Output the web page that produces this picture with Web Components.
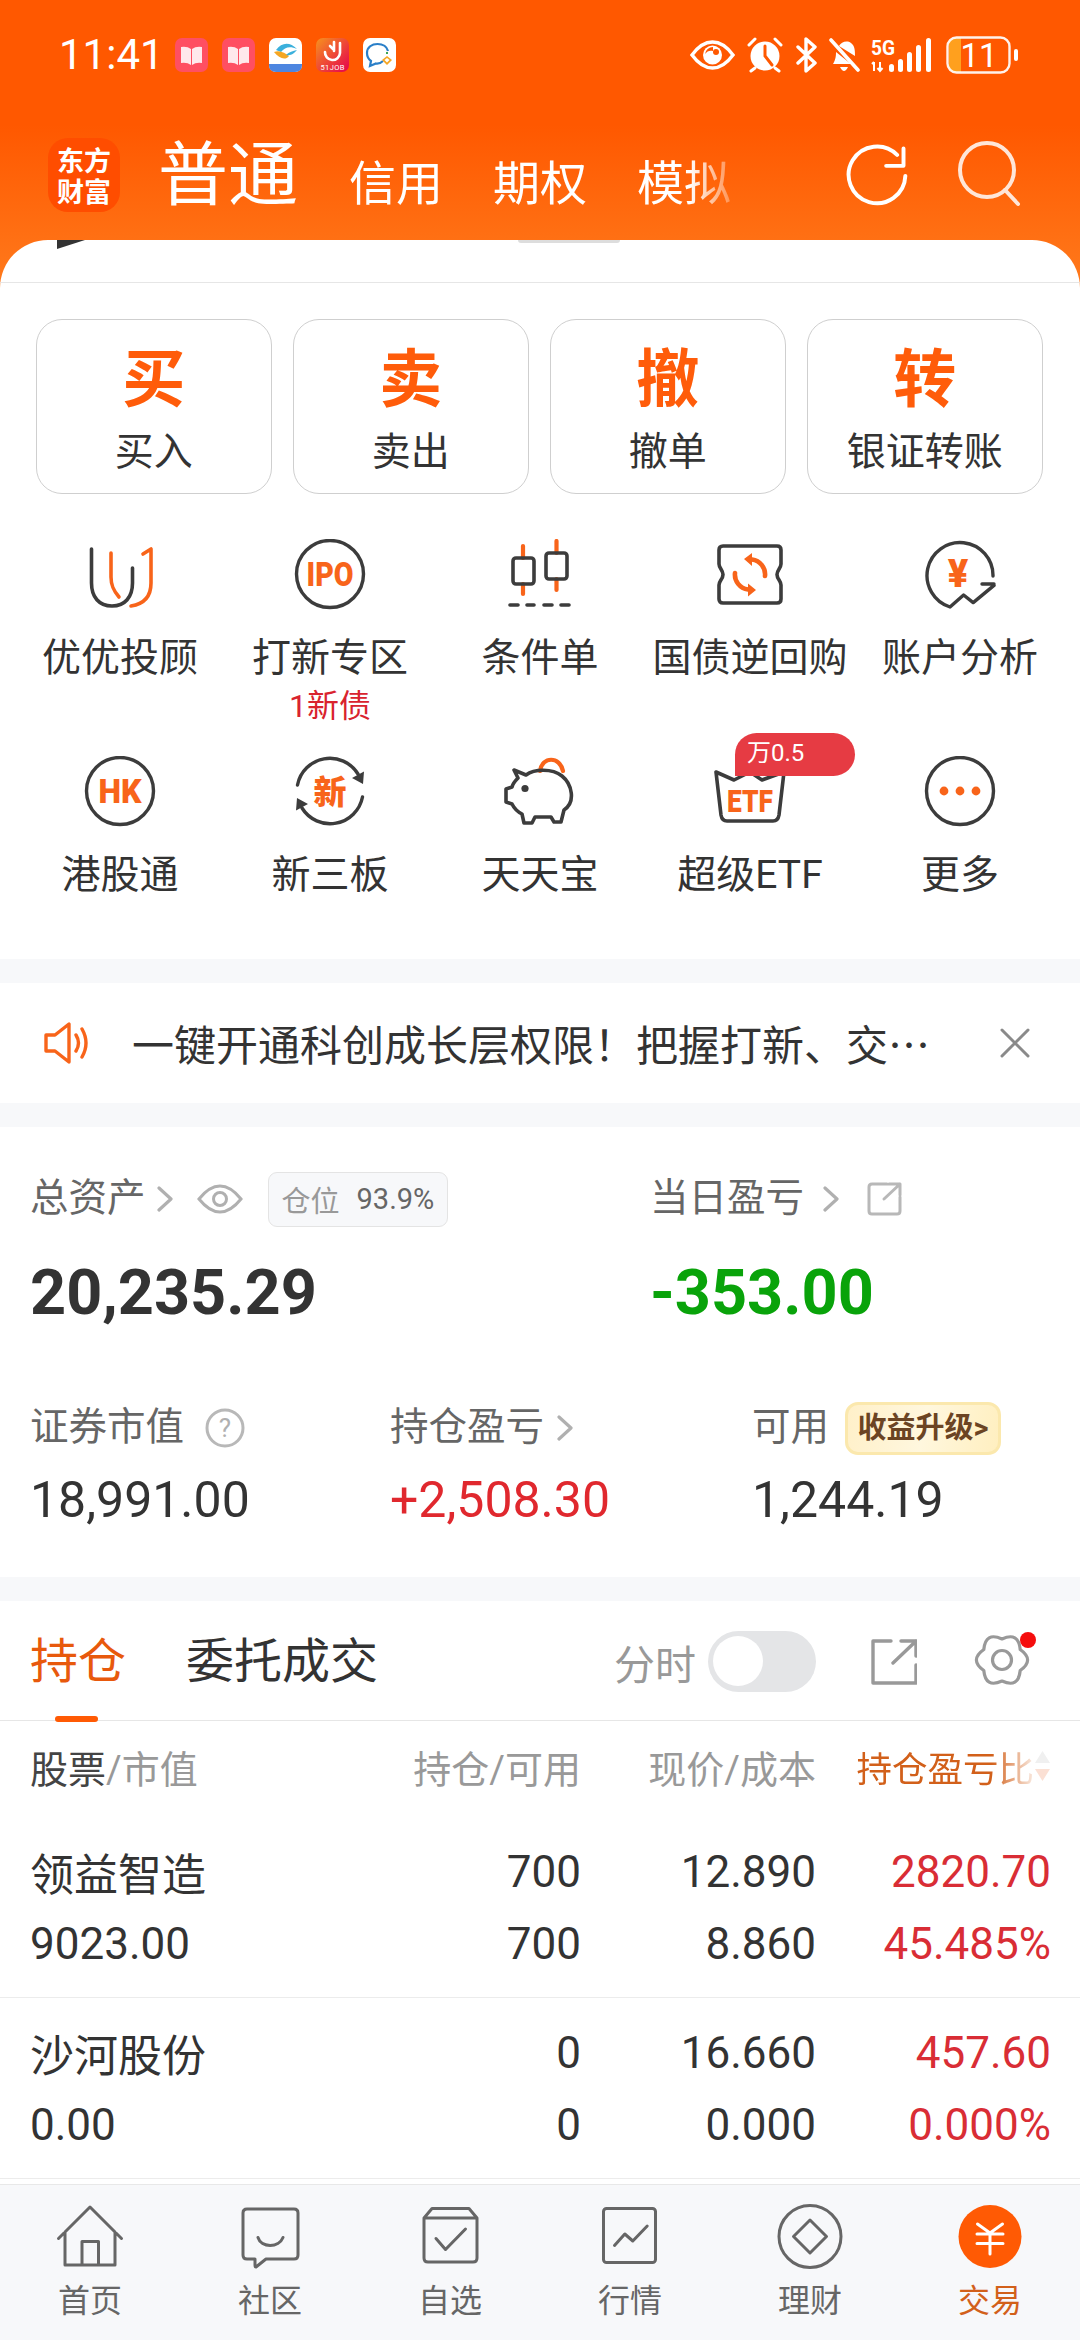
<!DOCTYPE html>
<html lang="zh">
<head>
<meta charset="utf-8">
<title>交易</title>
<style>
    html, body { margin: 0; padding: 0; }
    body {
        width: 1080px;
        height: 2340px;
        overflow: hidden;
        background: #fff;
        font-family: Roboto, "Noto Sans CJK SC", sans-serif;
        color: #333;
    }
    #app { display: flex; flex-direction: column; height: 2340px; }
    #scroll { flex: 1; min-height: 0; overflow: hidden; }
    .gap { height: 24px; background: #f7f8fa; }
    svg { display: block; }
</style>
</head>
<body>
<div id="app">
    <ef-header></ef-header>
    <div id="scroll">
        <ef-panel>
            <ef-action glyph="买" label="买入"></ef-action>
            <ef-action glyph="卖" label="卖出"></ef-action>
            <ef-action glyph="撤" label="撤单"></ef-action>
            <ef-action glyph="转" label="银证转账"></ef-action>

            <ef-entry slot="grid" label="优优投顾">
                <svg width="72" height="72" fill="none" stroke-width="3.6" stroke-linecap="round" stroke-linejoin="round">
                    <path stroke="#3c3c3c" d="M7.5 10V44C7.5 58 15 67 28 67C41 67 48.5 58 48.5 44V29"/>
                    <path stroke="#f8641a" d="M27 14V38C27 46 29 51 35 58M59 15L67 10V44C67 57 60 65 47 67"/>
                </svg>
            </ef-entry>
            <ef-entry slot="grid" label="打新专区" sub="1新债">
                <svg width="72" height="72" fill="none">
                    <circle cx="36" cy="35" r="33.5" stroke="#3c3c3c" stroke-width="3.4"/>
                    <text x="36" y="47" text-anchor="middle" font-family="Roboto" font-weight="900" font-size="33" fill="#f8641a" stroke="none" textLength="47" lengthAdjust="spacingAndGlyphs">IPO</text>
                </svg>
            </ef-entry>
            <ef-entry slot="grid" label="条件单">
                <svg width="72" height="72" fill="none" stroke-width="3.6" stroke-linecap="round" stroke-linejoin="round">
                    <path stroke="#f8641a" stroke-width="4.2" d="M19 7V19M19 45V55M52.5 2V14M52.5 40V51"/>
                    <rect x="9" y="19" width="21" height="26" rx="3" stroke="#3c3c3c"/>
                    <rect x="42" y="14" width="21" height="26" rx="3" stroke="#3c3c3c"/>
                    <path stroke="#3c3c3c" d="M6 66H14M23 66H30M40 66H48M57 66H65"/>
                </svg>
            </ef-entry>
            <ef-entry slot="grid" label="国债逆回购">
                <svg width="72" height="72" fill="none" stroke-linecap="round" stroke-linejoin="round">
                    <path stroke="#3c3c3c" stroke-width="3.6" d="M9 7H63Q67 7 67 11V25C67 29 63 31 63 35.5C63 40 67 42 67 46V60Q67 64 63 64H9Q5 64 5 60V46C5 42 9 40 9 35.5C9 31 5 29 5 25V11Q5 7 9 7Z"/>
                    <path stroke="#f8641a" stroke-width="4.6" d="M51 37A15 15 0 0 0 38 20.5M21 34A15 15 0 0 0 34 50.5"/>
                    <path fill="#f8641a" d="M30 20L38 14V27ZM42 51L34 44.5V57.5Z"/>
                </svg>
            </ef-entry>
            <ef-entry slot="grid" label="账户分析">
                <svg width="72" height="72" fill="none" stroke-linecap="round" stroke-linejoin="round">
                    <path stroke="#3c3c3c" stroke-width="3.4" d="M69 37A33 33 0 1 0 26 68L39.6 56L49.2 63.6L70 46.4M58 45H70"/>
                    <text x="34" y="48" text-anchor="middle" font-family="Roboto" font-weight="900" font-size="38" fill="#f8641a">¥</text>
                </svg>
            </ef-entry>
            <ef-entry slot="grid" label="港股通">
                <svg width="72" height="72" fill="none">
                    <circle cx="36" cy="35" r="33.5" stroke="#3c3c3c" stroke-width="3.4"/>
                    <text x="36" y="47" text-anchor="middle" font-family="Roboto" font-weight="900" font-size="33" fill="#f8641a" textLength="43" lengthAdjust="spacingAndGlyphs">HK</text>
                </svg>
            </ef-entry>
            <ef-entry slot="grid" label="新三板">
                <svg width="72" height="72" fill="none" stroke-linecap="round" stroke-linejoin="round">
                    <path stroke="#3c3c3c" stroke-width="3.4" d="M3.5 29A33 33 0 0 1 64 18M68.5 41A33 33 0 0 1 8 52"/>
                    <path fill="#3c3c3c" d="M58 22L70 15.5L69 28ZM14 48L2 54.5L3 42Z"/>
                    <text x="36" y="48" text-anchor="middle" font-family="'Noto Sans CJK SC'" font-weight="900" font-size="33" fill="#f8641a">新</text>
                </svg>
            </ef-entry>
            <ef-entry slot="grid" label="天天宝">
                <svg width="72" height="72" fill="none" stroke-linecap="round" stroke-linejoin="round">
                    <path stroke="#f8641a" stroke-width="4.2" d="M36 15C38 0 56 0 59 15"/>
                    <path stroke="#3c3c3c" stroke-width="3.6" d="M10 14L22 19C30 13 48 12 58 20C68 28 72 46 60 54L57 66H50L47 61H31L28 67H20L18 58C12 55 10 52 8 48L2 46V33L8 31C9 27 12 24 14 22Z"/>
                    <circle cx="21" cy="32.5" r="3.6" fill="#3c3c3c"/>
                </svg>
            </ef-entry>
            <ef-entry slot="grid" label="超级ETF" tag="万0.5">
                <svg width="72" height="72" fill="none" stroke-linecap="round" stroke-linejoin="round">
                    <path stroke="#3c3c3c" stroke-width="3.6" d="M2 16L7 59Q8 65 13 65H59Q64 65 65 59L70 16L48 24L36 16L20 24Z"/>
                    <text x="36" y="56" text-anchor="middle" font-family="Roboto" font-weight="900" font-size="31" fill="#f8641a" textLength="46" lengthAdjust="spacingAndGlyphs">ETF</text>
                </svg>
            </ef-entry>
            <ef-entry slot="grid" label="更多">
                <svg width="72" height="72" fill="none">
                    <circle cx="36" cy="35" r="33.5" stroke="#3c3c3c" stroke-width="3.4"/>
                    <circle cx="20" cy="35" r="4.4" fill="#f8641a"/><circle cx="36" cy="35" r="4.4" fill="#f8641a"/><circle cx="52" cy="35" r="4.4" fill="#f8641a"/>
                </svg>
            </ef-entry>
        </ef-panel>
        <div class="gap"></div>
        <ef-notice>一键开通科创成长层权限！把握打新、交…</ef-notice>
        <div class="gap"></div>
        <ef-assets></ef-assets>
        <div class="gap"></div>
        <ef-positions>
            <ef-stock name="领益智造" value="9023.00" hold="700" free="700" price="12.890" cost="8.860" pl="2820.70" ratio="45.485%"></ef-stock>
            <ef-stock name="沙河股份" value="0.00" hold="0" free="0" price="16.660" cost="0.000" pl="457.60" ratio="0.000%"></ef-stock>
        </ef-positions>
    </div>
    <ef-tabbar>
        <ef-tab label="首页">
            <svg width="72" height="72" fill="none" stroke="#666" stroke-width="3" stroke-linejoin="round" stroke-linecap="round"><path d="M4.5 37.5L36 6L67.5 37.5M11 31V64H61V31M28 64V40.5H44.5V64"/></svg>
        </ef-tab>
        <ef-tab label="社区">
            <svg width="72" height="72" fill="none" stroke="#666" stroke-width="3" stroke-linejoin="round" stroke-linecap="round"><path d="M13 8H60Q64 8 64 12V54Q64 58 60 58H32L22 66Q21 66 21 64V58H13Q9 58 9 54V12Q9 8 13 8ZM24 36.5C27 47 45 47 49 36.5"/></svg>
        </ef-tab>
        <ef-tab label="自选">
            <svg width="72" height="72" fill="none" stroke="#666" stroke-width="3" stroke-linejoin="round" stroke-linecap="round"><path d="M10 17L18 7.5H55L63 17V57Q63 61 59 61H14Q10 61 10 57ZM10 17H63M22 37.5L31.5 48.5L51.5 28"/></svg>
        </ef-tab>
        <ef-tab label="行情">
            <svg width="72" height="72" fill="none" stroke="#666" stroke-width="3" stroke-linejoin="round" stroke-linecap="round"><rect x="9.5" y="7.5" width="52" height="54" rx="3"/><path d="M20.5 44.5L30.8 33L38.8 40L53.2 25"/></svg>
        </ef-tab>
        <ef-tab label="理财">
            <svg width="72" height="72" fill="none" stroke="#666" stroke-width="3" stroke-linejoin="round"><circle cx="36" cy="35.5" r="31"/><path d="M36 19L52.500 35.500L36 52L19.500 35.500Z"/></svg>
        </ef-tab>
        <ef-tab label="交易" active>
            <svg width="72" height="72" fill="none" stroke="#fff" stroke-width="3" stroke-linecap="round"><circle cx="36" cy="35.500" r="31.500" fill="#ff5a04" stroke="none"/><path d="M23.500 23L36 32M48.500 23L36 32M23 33H49M23 42.500H49M36 32V53"/></svg>
        </ef-tab>
    </ef-tabbar>
</div>

<script>
class EfHeader extends HTMLElement {
    constructor() {
        super();
        this.attachShadow({mode: 'open'});
        this.shadowRoot.innerHTML = `
            <style>
                :host {
                    display: block;
                    height: 288px;
                    margin-bottom: -48px;
                    flex: none;
                    color: #fff;
                    background: linear-gradient(#ff5800 0, #ff5800 125px, #ff7a1c 288px);
                }
                #status {
                    display: flex;
                    align-items: center;
                    height: 36px;
                    padding: 37px 62px 0 59px;
                }
                #time { width: 116px; font: 400 42px/36px Roboto, sans-serif; }
                #apps { display: flex; gap: 14px; }
                #apps svg { width: 33px; height: 34px; }
                #sys { display: flex; align-items: center; margin-left: auto; }
                #nav { display: flex; align-items: center; height: 74px; padding: 65px 0 0 48px; }
                #logo {
                    flex: none;
                    box-sizing: border-box;
                    width: 72px;
                    height: 74px;
                    padding: 6px 9px 0;
                    border-radius: 20px;
                    background: #ff4d00;
                    font: 700 27px/31px "Noto Sans CJK SC", sans-serif;
                    text-align: center;
                }
                #tabs {
                    width: 584px;
                    margin-left: 38px;
                    display: flex;
                    align-items: baseline;
                    gap: 50px;
                    font: 400 47px/80px "Noto Sans CJK SC", sans-serif;
                    white-space: nowrap;
                    -webkit-mask-image: linear-gradient(to right, #000 91%, rgba(0,0,0,.1) 100%);
                    mask-image: linear-gradient(to right, #000 91%, rgba(0,0,0,.1) 100%);
                }
                #tabs b { font-weight: 400; font-size: 70px; margin-right: 1px; }
                #tools { display: flex; align-items: center; margin-left: 103px; gap: 49px; }
            </style>
            <div id="status">
                <div id="time">11:41</div>
                <div id="apps">
                    <svg viewBox="0 0 33 34"><rect width="33" height="34" rx="7" fill="#ff4f62"/><path fill="#fff" fill-opacity=".88" d="M6 9Q12 8 16 11V27Q12 24 6 25ZM27 9Q21 8 17 11V27Q21 24 27 25Z"/></svg>
                    <svg viewBox="0 0 33 34"><rect width="33" height="34" rx="7" fill="#ff4f62"/><path fill="#fff" fill-opacity=".88" d="M6 9Q12 8 16 11V27Q12 24 6 25ZM27 9Q21 8 17 11V27Q21 24 27 25Z"/></svg>
                    <svg viewBox="0 0 33 34"><rect width="33" height="34" rx="7" fill="#fff"/><path fill="#3bb0dc" d="M7 12C13 4 21 4 28 11C21 8 16 9 12 14Z"/><path fill="#f5a623" d="M5 14C11 12 16 15 20 18C16 23 10 20 5 14Z"/><path fill="#3bb0dc" d="M28 12C24 17 19 18 17 17C20 14 24 13 28 12Z"/><path fill="#4d86e0" d="M0 26H33V27Q33 34 26 34H7Q0 34 0 27Z"/></svg>
                    <svg viewBox="0 0 33 34"><defs><linearGradient id="job" x1="0" y1="0" x2="1" y2="1"><stop offset="0" stop-color="#f7931e"/><stop offset="1" stop-color="#e5004f"/></linearGradient></defs><rect width="33" height="34" rx="7" fill="url(#job)"/><path fill="none" stroke="#fff" stroke-width="2.600" stroke-linecap="round" d="M9 14A7.500 7.500 0 1 0 24 15V5M18 4V13M14 8L17 11"/><text x="16.500" y="31.500" text-anchor="middle" font-family="Roboto" font-size="7.500" fill="#fff" textLength="24">51JOB</text></svg>
                    <svg viewBox="0 0 33 34"><rect width="33" height="34" rx="7" fill="#fff"/><path fill="none" stroke="#2a7fc8" stroke-width="2.200" d="M20 23Q17 26 13 25.500L7 28L8 23Q4 20 4 15C4 9 9 6 14.500 6C20 6 24 9 25 13"/><path fill="#f5a623" d="M24 18L29 22L24 27L19 22Z"/><path fill="#fff" d="M24 20L26.500 22L24 24.500L21.500 22Z"/><path fill="#3aa655" d="M23 14L25 14L25 16L23 16Z"/></svg>
                </div>
                <div id="sys">
                    <svg width="45" height="30" viewBox="0 0 45 30" style="margin-right:12px"><path fill="none" stroke="#fff" stroke-width="3.400" d="M2 15C10 4 17 2 22.500 2S35 4 43 15C35 26 28 28 22.500 28S10 26 2 15Z"/><circle cx="22.500" cy="15" r="9.500" fill="#fff"/><path fill="#ff5800" d="M23 7A8 8 0 0 0 15 14C17 11 20 10 23 11Z"/><circle cx="26" cy="12" r="3" fill="#ff5800"/></svg>
                    <svg width="36" height="36" viewBox="0 0 36 36" style="margin-right:12px"><circle cx="18" cy="19" r="14.500" fill="#fff"/><path fill="none" stroke="#ff5800" stroke-width="3" stroke-linecap="round" d="M18 9V19L25 28"/><path fill="none" stroke="#fff" stroke-width="3" stroke-linecap="round" d="M2 8L8 2M34 8L28 2M4 34L8 31M32 34L28 31"/></svg>
                    <svg width="23" height="36" viewBox="0 0 23 36" style="margin-right:11px"><path fill="none" stroke="#fff" stroke-width="3.400" stroke-linejoin="round" stroke-linecap="round" d="M3 26L20 10L11 2V34L20 26L3 10"/></svg>
                    <svg width="31" height="36" viewBox="0 0 31 36" style="margin-right:11px"><path fill="#fff" d="M4 27C7 22 7 18 7 15L22 27ZM10 9C12 5 18 3 22 6C26 9 26 14 26 19Z"/><path fill="none" stroke="#fff" stroke-width="3.600" stroke-linecap="round" d="M2 3L29 33"/><path fill="#fff" d="M11 30H19Q17 34 15 34T11 30Z"/></svg>
                    <svg width="62" height="36" viewBox="0 0 62 36" style="margin-right:13px">
                        <text x="0" y="18" font-family="Roboto" font-weight="700" font-size="20" fill="#fff" textLength="24" lengthAdjust="spacingAndGlyphs">5G</text>
                        <path fill="none" stroke="#fff" stroke-width="2" d="M3 25V34M1 27L3 25M9 25V34M6.500 31L9 34L11.500 31"/>
                        <g fill="#fff"><rect x="18" y="27" width="5" height="8" rx="2.500"/><rect x="27" y="22" width="5" height="13" rx="2.500"/><rect x="36" y="15" width="5" height="20" rx="2.500"/><rect x="45" y="8" width="5" height="27" rx="2.500"/><rect x="55" y="1" width="5" height="34" rx="2.500"/></g>
                    </svg>
                    <svg width="72" height="38" viewBox="0 0 72 38">
                        <rect x="3" y="2" width="12" height="34" rx="6" fill="#ffa01e"/><rect x="9" y="2" width="6" height="34" fill="#ffa01e"/>
                        <rect x="1.500" y="1.500" width="62" height="35" rx="9" fill="none" stroke="#fff" stroke-opacity=".92" stroke-width="2.400"/>
                        <text x="33" y="31" text-anchor="middle" font-family="Roboto" font-size="33" fill="#fff">11</text>
                        <rect x="68" y="13" width="4" height="12" rx="2" fill="#fff"/>
                    </svg>
                </div>
            </div>
            <div id="nav">
                <div id="logo">东方财富</div>
                <div id="tabs"><b>普通</b><span>信用</span><span>期权</span><span>模拟</span></div>
                <div id="tools">
                    <svg width="64" height="64" viewBox="0 0 70 70" fill="none" stroke="#fff" stroke-width="4.300" stroke-linecap="round" stroke-linejoin="round"><path d="M64 6V25H45M57 13A31 31 0 1 0 66 36"/></svg>
                    <svg width="66" height="70" fill="none" stroke="#ffe6d8" stroke-width="4" stroke-linecap="round"><circle cx="29" cy="30" r="27"/><path d="M47 50L60 64"/></svg>
                </div>
            </div>
        `;
    }
}

class EfPanel extends HTMLElement {
    constructor() {
        super();
        this.attachShadow({mode: 'open'});
        this.shadowRoot.innerHTML = `
            <style>
                :host {
                    display: block;
                    position: relative;
                    background: #fff;
                    border-radius: 48px 48px 0 0;
                    overflow: hidden;
                }
                #peek { height: 42px; border-bottom: 1px solid #e6e6e6; }
                #arrow {
                    position: absolute;
                    left: 57px;
                    top: 0;
                    width: 28px;
                    height: 9px;
                    background: #333;
                    clip-path: polygon(0 0, 100% 0, 0 100%);
                }
                #bar {
                    position: absolute;
                    left: 518px;
                    top: 0;
                    width: 102px;
                    height: 3px;
                    background: #ddd;
                    border-radius: 0 0 8px 8px;
                }
                #actions {
                    display: grid;
                    grid-template-columns: repeat(4, 235.500px);
                    column-gap: 21.500px;
                    padding: 36px 0 0 36px;
                }
                #grid {
                    display: grid;
                    grid-template-columns: repeat(5, 210px);
                    row-gap: 30px;
                    padding: 45px 15px 59px;
                }
            </style>
            <div id="arrow"></div><div id="bar"></div>
            <div id="peek"></div>
            <div id="actions"><slot></slot></div>
            <div id="grid"><slot name="grid"></slot></div>
        `;
    }
}

class EfAction extends HTMLElement {
    constructor() {
        super();
        this.attachShadow({mode: 'open'});
    }
    connectedCallback() {
        this.shadowRoot.innerHTML = `
            <style>
                :host {
                    display: flex;
                    flex-direction: column;
                    align-items: center;
                    box-sizing: border-box;
                    height: 175px;
                    border: 1.500px solid #cfcfcf;
                    border-radius: 26px;
                    font-family: "Noto Sans CJK SC", sans-serif;
                }
                #g { margin-top: 15px; font-size: 63px; line-height: 78px; font-weight: 700; color: #ff5c0a; }
                #l { margin-top: 10px; font-size: 39px; line-height: 50px; color: #333; }
            </style>
            <div id="g">${this.getAttribute('glyph')}</div>
            <div id="l">${this.getAttribute('label')}</div>
        `;
    }
}

class EfEntry extends HTMLElement {
    constructor() {
        super();
        this.attachShadow({mode: 'open'});
    }
    connectedCallback() {
        const sub = this.getAttribute('sub');
        const tag = this.getAttribute('tag');
        this.shadowRoot.innerHTML = `
            <style>
                :host {
                    display: flex;
                    flex-direction: column;
                    align-items: center;
                    font-family: Roboto, "Noto Sans CJK SC", sans-serif;
                }
                #icon { position: relative; width: 72px; height: 72px; }
                #l { margin-top: 22px; font-size: 39px; line-height: 50px; color: #333; white-space: nowrap; }
                #s { margin-top: 3px; font-size: 32px; line-height: 40px; color: #d9232e; }
                #t {
                    position: absolute;
                    left: 21px;
                    top: -23px;
                    box-sizing: border-box;
                    width: 120px;
                    height: 43px;
                    padding-left: 12px;
                    background: #e63b43;
                    border-radius: 22px 22px 22px 0;
                    color: #fff;
                    font-size: 24px;
                    line-height: 41px;
                }
            </style>
            <div id="icon"><slot></slot>${tag ? `<div id="t">${tag}</div>` : ''}</div>
            <div id="l">${this.getAttribute('label')}</div>
            ${sub ? `<div id="s">${sub}</div>` : ''}
        `;
    }
}

class EfNotice extends HTMLElement {
    constructor() {
        super();
        this.attachShadow({mode: 'open'});
        this.shadowRoot.innerHTML = `
            <style>
                :host {
                    display: flex;
                    align-items: center;
                    height: 120px;
                    background: #fff;
                    padding-left: 43px;
                    font-family: "Noto Sans CJK SC", sans-serif;
                }
                #text { margin-left: 43px; width: 870px; font-size: 42px; line-height: 60px; color: #333; white-space: nowrap; }
            </style>
            <svg width="46" height="46" fill="none" stroke="#f8641a" stroke-width="3.400" stroke-linejoin="round" stroke-linecap="round"><path d="M3 15H12L26 4V42L12 31H3ZM33 15Q38 23 33 31M39 9Q47 23 39 37"/></svg>
            <div id="text"><slot></slot></div>
            <svg width="30" height="30" fill="none" stroke="#8a8a8a" stroke-width="3" stroke-linecap="round" style="margin-left:-2px"><path d="M2 2L28 28M28 2L2 28"/></svg>
        `;
    }
}

class EfAssets extends HTMLElement {
    constructor() {
        super();
        this.attachShadow({mode: 'open'});
        const chev = gap => `<svg class="chev" style="margin-left:${gap}px" width="16" height="26" fill="none" stroke="#b0b0b0" stroke-width="3.200" stroke-linecap="round" stroke-linejoin="round"><path d="M2 2L14 13L2 24"/></svg>`;
        this.shadowRoot.innerHTML = `
            <style>
                :host {
                    display: block;
                    box-sizing: border-box;
                    height: 450px;
                    padding: 44px 0 0 30px;
                    background: #fff;
                    font-family: Roboto, "Noto Sans CJK SC", sans-serif;
                }
                .top { display: grid; grid-template-columns: 620px 1fr; }
                .bottom { display: grid; grid-template-columns: 360px 362px 1fr; margin-top: 67px; }
                .label { display: flex; align-items: center; height: 56px; font-size: 38.500px; color: #666; white-space: nowrap; }
                .label span { margin-bottom: 10px; }
                .big { font-size: 63px; line-height: 80px; font-weight: 700; margin-top: 26px; color: #333; }
                .val { font-size: 50px; line-height: 70px; margin-top: 9px; color: #333; }
                #rate {
                    display: flex;
                    align-items: center;
                    box-sizing: border-box;
                    height: 55px;
                    width: 180px;
                    margin-left: 25px;
                    padding-left: 13px;
                    border: 1px solid #e4e4e4;
                    border-radius: 9px;
                    background: #f7f8fa;
                    font-size: 29px;
                    color: #666;
                }
                #rate i { font-style: normal; color: #999; margin-right: 17px; }
                #up {
                    margin-left: 16px;
                    box-sizing: border-box;
                    width: 156px;
                    height: 53px;
                    border: 3px solid #fbe8ad;
                    border-radius: 13px;
                    background: linear-gradient(100deg, #fff0c9, #fff7de 50%, #ffefc0);
                    color: #6b4423;
                    font-size: 29px;
                    font-weight: 700;
                    line-height: 47px;
                    text-align: center;
                    white-space: nowrap;
                }
            </style>
            <div class="top">
                <div>
                    <div class="label"><span>总资产</span>${chev(11)}
                        <svg width="46" height="32" fill="none" stroke="#b0b0b0" stroke-width="3" style="margin-left:24px"><path d="M2 16C10 6 17 3 23 3S36 6 44 16C36 26 29 29 23 29S10 26 2 16Z"/><circle cx="23" cy="16" r="6.500"/></svg>
                        <div id="rate"><i>仓位</i>93.9%</div>
                    </div>
                    <div class="big">20,235.29</div>
                </div>
                <div>
                    <div class="label"><span>当日盈亏</span>${chev(19)}
                        <svg width="36" height="36" fill="none" stroke="#b8b8b8" stroke-width="3" stroke-linecap="round" stroke-linejoin="round" style="margin-left:28px"><path d="M20 3H5Q2 3 2 6V30Q2 33 5 33H30Q33 33 33 30V16M17 18L33 3M22 3H33V14"/></svg>
                    </div>
                    <div class="big" style="color:#09a30a">-353.00</div>
                </div>
            </div>
            <div class="bottom">
                <div>
                    <div class="label"><span>证券市值</span>
                        <svg width="40" height="40" fill="none" stroke="#b8b8b8" stroke-width="3" style="margin-left:21px"><circle cx="20" cy="20" r="18"/><text x="20" y="29" text-anchor="middle" font-family="Roboto" font-size="26" fill="#b0b0b0" stroke="none">?</text></svg>
                    </div>
                    <div class="val">18,991.00</div>
                </div>
                <div>
                    <div class="label"><span>持仓盈亏</span>${chev(13)}</div>
                    <div class="val" style="color:#e0282e">+2,508.30</div>
                </div>
                <div>
                    <div class="label"><span>可用</span><div id="up">收益升级&gt;</div></div>
                    <div class="val">1,244.19</div>
                </div>
            </div>
        `;
    }
}

class EfPositions extends HTMLElement {
    constructor() {
        super();
        this.attachShadow({mode: 'open'});
        this.shadowRoot.innerHTML = `
            <style>
                :host { display: block; background: #fff; font-family: Roboto, "Noto Sans CJK SC", sans-serif; }
                #tabs {
                    display: flex;
                    align-items: center;
                    box-sizing: border-box;
                    height: 120px;
                    padding: 2px 0 0 30px;
                    border-bottom: 1px solid #e6e6e6;
                }
                #on { position: relative; font-size: 48px; line-height: 64px; color: #e8590c; }
                #on::after {
                    content: "";
                    position: absolute;
                    left: 25px;
                    bottom: -28px;
                    width: 43px;
                    height: 6px;
                    border-radius: 3px;
                    background: #ff5a04;
                }
                #off { margin-left: 60px; font-size: 48px; line-height: 64px; color: #333; }
                #time { margin-left: auto; font-size: 41px; color: #999; }
                #switch {
                    margin-left: 12px;
                    box-sizing: border-box;
                    width: 108px;
                    height: 61px;
                    padding: 5px;
                    border-radius: 31px;
                    background: #e4e5e7;
                }
                #switch div { width: 50px; height: 50px; border-radius: 50%; background: #fff; }
                #gear { position: relative; margin: 0 50px 0 57px; }
                #gear i {
                    position: absolute;
                    right: -6px;
                    top: 0;
                    width: 16px;
                    height: 16px;
                    border-radius: 50%;
                    background: #f50d0d;
                }
                #head {
                    display: grid;
                    grid-template-columns: 311px 240px 235px 235px;
                    align-items: center;
                    height: 90px;
                    padding: 0 0 6px 30px;
                    font-size: 38px;
                    color: #999;
                    text-align: right;
                }
                #head > :first-child { text-align: left; }
                #head em { font-style: normal; color: #444; }
                #sort { display: flex; justify-content: flex-end; align-items: center; font-size: 35.500px; color: #d2601a; }
                #sort span {
                    -webkit-mask-image: linear-gradient(to right, #000 76%, rgba(0,0,0,.2) 98%);
                    mask-image: linear-gradient(to right, #000 76%, rgba(0,0,0,.2) 98%);
                }
            </style>
            <div id="tabs">
                <div id="on">持仓</div>
                <div id="off">委托成交</div>
                <div id="time">分时</div>
                <div id="switch"><div></div></div>
                <svg width="46" height="47" fill="none" stroke="#999" stroke-width="3.400" stroke-linecap="round" stroke-linejoin="round" style="margin-left:55px"><path d="M20 3H2V45H45V27M22 25L45 3M30 3H45V18"/></svg>
                <div id="gear">
                    <svg width="56" height="56" viewBox="-28 -28 56 56" fill="none" stroke="#999" stroke-width="3.200" stroke-linejoin="round"><path d="M18.200 -10.500Q33 0 18.200 10.500Q16.500 28.600 0 21Q-16.500 28.600 -18.200 10.500Q-33 0 -18.200 -10.500Q-16.500 -28.600 0 -21Q16.500 -28.600 18.200 -10.500Z"/><circle r="9.500"/></svg>
                    <i></i>
                </div>
            </div>
            <div id="head">
                <div><em>股票</em>/市值</div>
                <div>持仓/可用</div>
                <div>现价/成本</div>
                <div id="sort"><span>持仓盈亏比</span>
                    <svg width="17" height="36"><path fill="#f0f0f0" d="M8.500 3L16 15H1Z"/><path fill="#fbe0d4" d="M8.500 33L16 21H1Z"/></svg>
                </div>
            </div>
            <slot></slot>
        `;
    }
}

class EfStock extends HTMLElement {
    constructor() {
        super();
        this.attachShadow({mode: 'open'});
    }
    connectedCallback() {
        const a = n => this.getAttribute(n);
        this.shadowRoot.innerHTML = `
            <style>
                :host {
                    display: grid;
                    grid-template-columns: 311px 240px 235px 235px;
                    grid-auto-rows: 72px;
                    align-items: center;
                    box-sizing: border-box;
                    height: 181px;
                    padding: 19px 0 0 30px;
                    border-bottom: 1px solid #ececec;
                    font-size: 44px;
                    color: #333;
                    text-align: right;
                }
                .n { text-align: left; }
                .r { color: #d92d35; }
            </style>
            <div class="n">${a('name')}</div><div>${a('hold')}</div><div>${a('price')}</div><div class="r">${a('pl')}</div>
            <div class="n">${a('value')}</div><div>${a('free')}</div><div>${a('cost')}</div><div class="r">${a('ratio')}</div>
        `;
    }
}

class EfTabbar extends HTMLElement {
    constructor() {
        super();
        this.attachShadow({mode: 'open'});
        this.shadowRoot.innerHTML = `
            <style>
                :host {
                    display: grid;
                    grid-template-columns: repeat(6, 180px);
                    flex: none;
                    box-sizing: border-box;
                    height: 156px;
                    padding-top: 16px;
                    border-top: 1px solid #e8e8e8;
                    background: #f7f8fa;
                }
            </style>
            <slot></slot>
        `;
    }
}

class EfTab extends HTMLElement {
    constructor() {
        super();
        this.attachShadow({mode: 'open'});
    }
    connectedCallback() {
        const color = this.hasAttribute('active') ? '#d2601a' : '#666';
        this.shadowRoot.innerHTML = `
            <style>
                :host { display: flex; flex-direction: column; align-items: center; font-family: "Noto Sans CJK SC", sans-serif; }
                #l { margin-top: 4px; font-size: 32px; line-height: 42px; color: ${color}; }
            </style>
            <slot></slot>
            <div id="l">${this.getAttribute('label')}</div>
        `;
    }
}

customElements.define('ef-header', EfHeader);
customElements.define('ef-panel', EfPanel);
customElements.define('ef-action', EfAction);
customElements.define('ef-entry', EfEntry);
customElements.define('ef-notice', EfNotice);
customElements.define('ef-assets', EfAssets);
customElements.define('ef-positions', EfPositions);
customElements.define('ef-stock', EfStock);
customElements.define('ef-tabbar', EfTabbar);
customElements.define('ef-tab', EfTab);
</script>
</body>
</html>
